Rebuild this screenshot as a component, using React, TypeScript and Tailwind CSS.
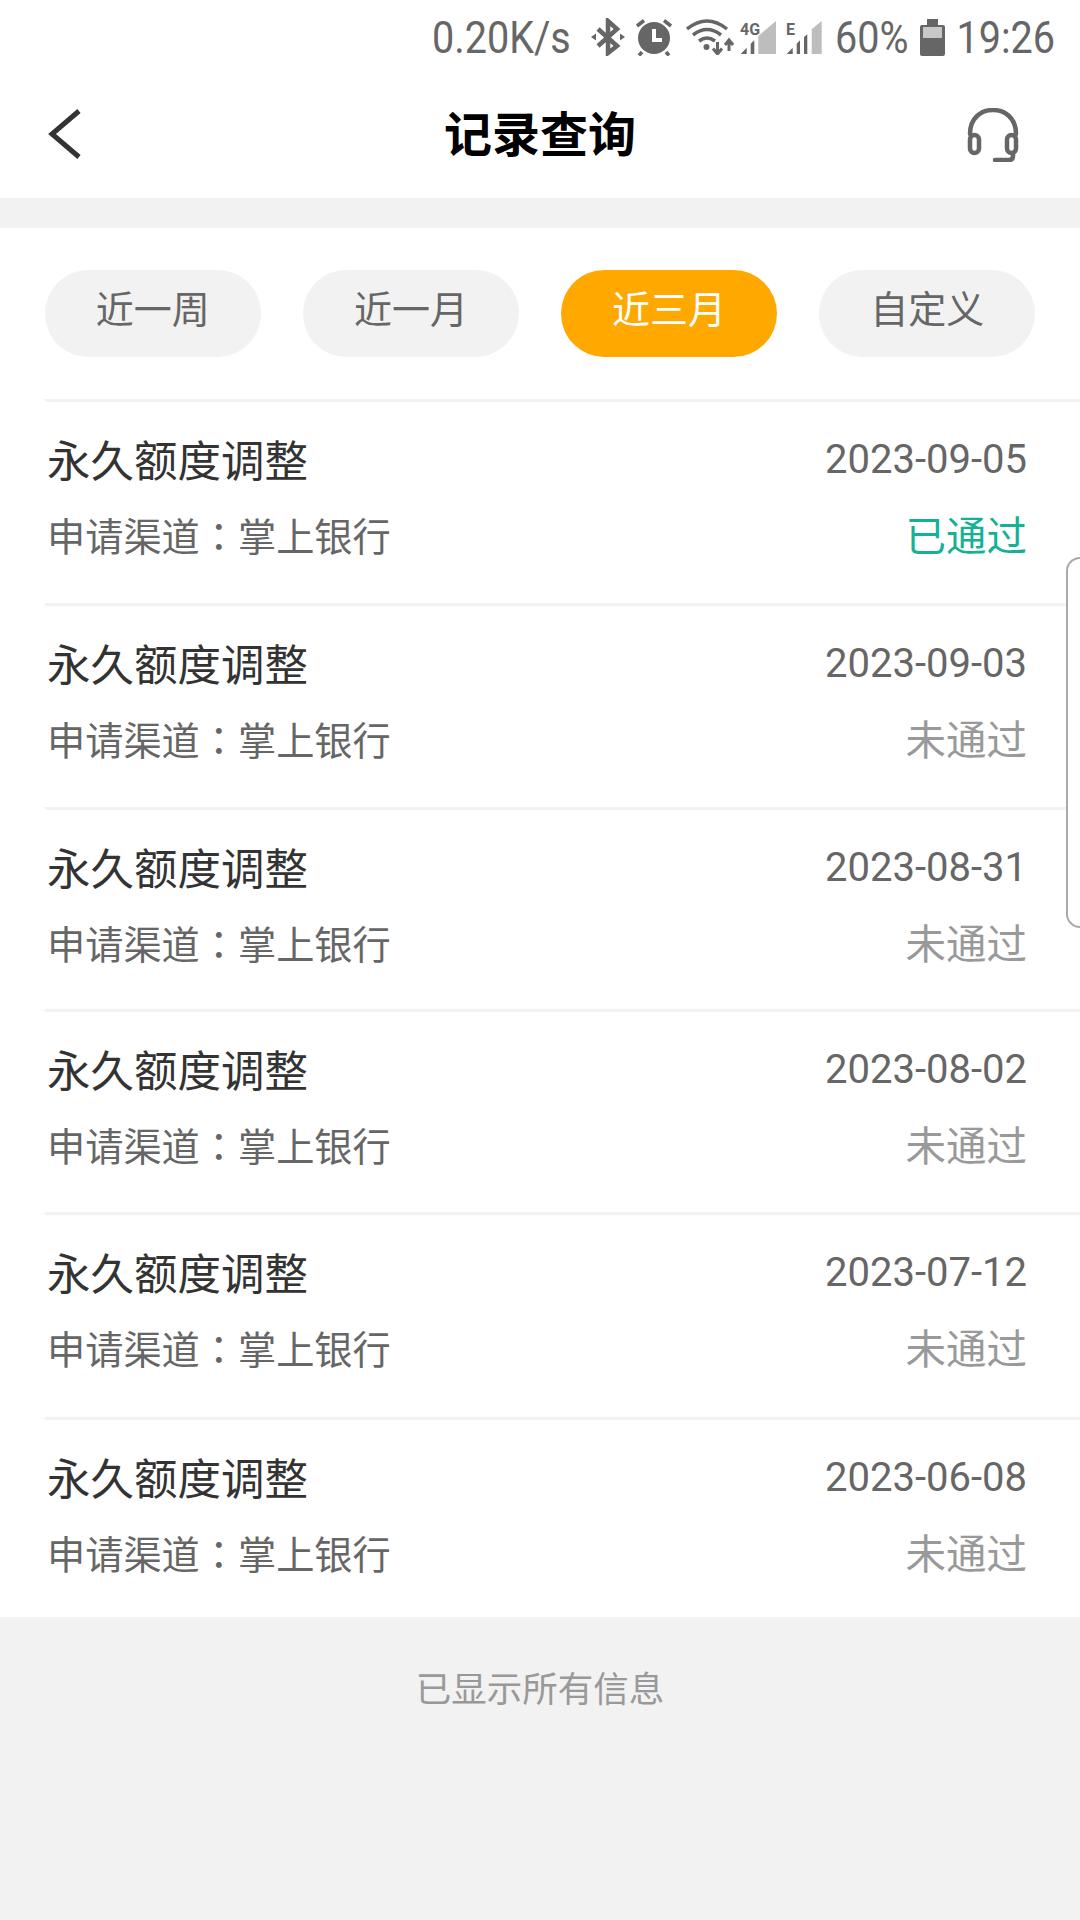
const FONT = "font-['Roboto','Noto_Sans_CJK_SC',sans-serif]";

const tabs = ["近一周", "近一月", "近三月", "自定义"];

const records = [
  { date: "2023-09-05", status: "已通过", rowClass: "h-[204px]" },
  { date: "2023-09-03", status: "未通过", rowClass: "h-[204px]" },
  { date: "2023-08-31", status: "未通过", rowClass: "h-[202px]" },
  { date: "2023-08-02", status: "未通过", rowClass: "h-[203px]" },
  { date: "2023-07-12", status: "未通过", rowClass: "h-[205px]" },
  { date: "2023-06-08", status: "未通过", rowClass: "h-[200px]" },
];

function StatusIcons() {
  return (
    <>
      {/* 蓝牙 */}
      <svg width="34" height="38" viewBox="0 0 34 38" className="ml-[20px]" fill="none" stroke="#666" strokeWidth="4.5">
        <path d="M7 11 L26 28 L17 35 V3 L26 11 L7 28" />
        <path d="M0 19 L5 15.5 V22.5 Z M34 19 L29 15.5 V22.5 Z" fill="#666" stroke="none" />
      </svg>
      {/* 闹钟 */}
      <svg width="38" height="38" viewBox="0 0 38 38" className="ml-[10px]">
        <circle cx="19" cy="20" r="16" fill="#666" />
        <path d="M2 8 L9 2.5 M36 8 L29 2.5 M7 34 L4 37.5 M31 34 L34 37.5" stroke="#666" strokeWidth="3.5" />
        <path d="M19 11 V22 H27" stroke="#fff" strokeWidth="4" fill="none" />
      </svg>
      {/* wifi */}
      <svg width="48" height="36" viewBox="0 0 48 36" className="ml-[13px]" fill="none">
        <path d="M1 10 Q21 -6 41 10 M7 16 Q21 5 35 16 M13 22 Q21 16 29 22" stroke="#666" strokeWidth="3.5" />
        <circle cx="20.5" cy="28" r="3" fill="#666" />
        <path d="M31.5 23 V35 M27 29.5 L31.5 35 L36 29.5" stroke="#666" strokeWidth="3" />
        <path d="M43 32 V21 M39 26 L43 21 L47 26" stroke="#666" strokeWidth="3" />
      </svg>
      {/* 4G 信号 */}
      <svg width="38" height="36" viewBox="0 0 38 36" className="ml-[5px]">
        <path d="M19.3 35 V17 L37 2 V35 Z" fill="#bdbdbd" />
        <path d="M1.7 35 L7.7 28.7 V35 Z M11.7 35 V24.7 L15.3 21.3 V35 Z" fill="#666" />
        <text x="1" y="15.5" fontSize="16" fontWeight="700" fill="#666" fontFamily="Roboto, sans-serif">4G</text>
      </svg>
      {/* E 信号 */}
      <svg width="38" height="36" viewBox="0 0 38 36" className="ml-[8px]">
        <path d="M26.7 35 V10.3 L36.7 2 V35 Z" fill="#bdbdbd" />
        <path d="M1.7 35 L7.7 28.7 V35 Z M11.7 35 V24.7 L15 21.3 V35 Z M19 35 V18 L22.3 15.3 V35 Z" fill="#666" />
        <text x="1" y="15.5" fontSize="16" fontWeight="700" fill="#666" fontFamily="Roboto, sans-serif">E</text>
      </svg>
    </>
  );
}

// 状态栏字体偏窄，用 scale-x 压一下
function StatusText({ text, widthClass, className = "" }: { text: string; widthClass: string; className?: string }) {
  return (
    <span className={`flex justify-end ${widthClass} ${className}`}>
      <span className="origin-right scale-x-[.88] whitespace-nowrap">{text}</span>
    </span>
  );
}

function StatusBar() {
  return (
    <div className="flex h-[70px] items-center justify-end pr-[25px] pt-[4px] text-[45px] leading-none text-[#666]">
      <StatusText text="0.20K/s" widthClass="w-[136px]" />
      <StatusIcons />
      <StatusText text="60%" widthClass="w-[67px]" className="ml-[18.5px]" />
      {/* 电池 */}
      <svg width="25" height="37" viewBox="0 0 25 37" className="ml-[11.5px]">
        <path d="M7 0 H18 V6 H23 Q25 6 25 8 V35 Q25 37 23 37 H2 Q0 37 0 35 V8 Q0 6 2 6 H7 Z" fill="#666" />
        <rect x="3" y="8" width="19" height="11" fill="#c8c8c8" />
      </svg>
      <StatusText text="19:26" widthClass="w-[96px]" className="ml-[14px]" />
    </div>
  );
}

function Header() {
  return (
    <div className="grid h-[128px] grid-cols-[1fr_auto_1fr] items-center px-[48px]">
      <svg width="34" height="50" viewBox="0 0 34 50" fill="none" stroke="#333" strokeWidth="5">
        <path d="M31 2 L4 25 L31 48" />
      </svg>
      <div className="mt-[4px] text-[48px] font-bold leading-none text-black">记录查询</div>
      <svg width="52" height="54" viewBox="0 0 52 54" className="mt-[2px] mr-[13px] justify-self-end" fill="none" stroke="#666" strokeWidth="4.5" strokeLinecap="round">
        <path d="M3 26 C3 10 14 2 26 2 C38 2 49 10 49 26" />
        <rect x="3" y="27" width="9" height="18" rx="4.5" />
        <rect x="40" y="27" width="9" height="18" rx="4.5" />
        <path d="M46 45 V48 C46 51 44 52 42 52 H28" />
      </svg>
    </div>
  );
}

export default function App() {
  return (
    <div className={`${FONT} relative flex h-[1920px] w-[1080px] flex-col overflow-hidden bg-[#f2f2f2]`}>
      <div className="bg-white">
        <StatusBar />
        <Header />
      </div>

      <div className="mt-[30px] bg-white">
        <div className="flex gap-[42.5px] px-[45px] pt-[42px] pb-[42px]">
          {tabs.map((tab, i) => (
            <div
              key={tab}
              className={`flex h-[87px] w-[216px] items-center justify-center rounded-full pb-[6px] text-[38px] ${
                i === 2 ? "bg-[#ffa800] text-white" : "bg-[#f2f2f2] text-[#666]"
              }`}
            >
              {tab}
            </div>
          ))}
        </div>

        <div className="pl-[45px]">
          {records.map((r) => (
            <div key={r.date} className={`${r.rowClass} border-t-[3px] border-[#f2f2f2] pt-[31px] pr-[53px] pl-[2px]`}>
              <div className="flex items-start justify-between">
                <span className="text-[43.5px] leading-[60px] text-[#333]">永久额度调整</span>
                <span className="text-[40px] leading-[54px] text-[#666]">{r.date}</span>
              </div>
              <div className="mt-[17px] flex items-center justify-between">
                <span className="text-[38.2px] leading-[50px] text-[#666]">
                  申请渠道<span className="font-['Noto_Sans_CJK_TC']">：</span>掌上银行
                </span>
                <span className={`text-[40.5px] leading-[50px] ${r.status === "已通过" ? "text-[#15b194]" : "text-[#999]"}`}>
                  {r.status}
                </span>
              </div>
            </div>
          ))}
        </div>
      </div>

      <div className="pt-[48px] text-center text-[35.5px] leading-[50px] text-[#999]">已显示所有信息</div>

      {/* 右侧悬浮条 */}
      <div className="absolute top-[557px] right-0 h-[371px] w-[14px] rounded-l-[14px] border-2 border-r-0 border-[#aaa] bg-white" />
    </div>
  );
}
